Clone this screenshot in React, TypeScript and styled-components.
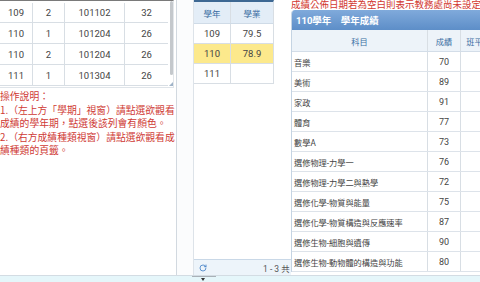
import styled, { createGlobalStyle } from 'styled-components';
import { RotateCw } from 'lucide-react';

const GlobalStyle = createGlobalStyle`
	html, body { margin: 0; padding: 0; }
	body {
		font-family: Roboto, "Noto Sans CJK TC", sans-serif;
		background: #fff;
		color: #444;
	}
`;

const terms = [
	['109', '2', '101102', '32'],
	['110', '1', '101204', '26'],
	['110', '2', '101204', '26'],
	['111', '1', '101304', '26']
];

const years = [
	{ year: '109', score: '79.5' },
	{ year: '110', score: '78.9', selected: true },
	{ year: '111', score: '' }
];

const grades = [
	['音樂', '70'],
	['美術', '89'],
	['家政', '91'],
	['體育', '77'],
	['數學A', '73'],
	['選修物理-力學一', '76'],
	['選修物理-力學二與熱學', '72'],
	['選修化學-物質與能量', '75'],
	['選修化學-物質構造與反應速率', '87'],
	['選修生物-細胞與遺傳', '90'],
	['選修生物-動物體的構造與功能', '80']
];

const notes = [
	'操作說明：',
	'1.（左上方「學期」視窗）請點選欲觀看',
	'成績的學年期，點選後該列會有顏色。',
	'2.（右方成績種類視窗）請點選欲觀看成',
	'績種類的頁籤。'
];

function App() {
	return (
		<>
			<GlobalStyle />
			<Page>
				<Main>
					<LeftPane>
						<TermBox>
							<TermTable>
								{terms.map((row, i) => (
									<TermRow key={i} $first={i === 0}>
										{row.map((cell, j) => <TermCell key={j}>{cell}</TermCell>)}
									</TermRow>
								))}
							</TermTable>
							<ScrollTrack>
								<Thumb />
								<Grip />
							</ScrollTrack>
						</TermBox>
						<Notes>
							{notes.map(line => <NoteLine key={line}>{line}</NoteLine>)}
						</Notes>
					</LeftPane>
					<Gutter />
					<MidPane>
						<YearTable>
							<YearHead>
								<YearCell $head>學年</YearCell>
								<YearCell $head>學業</YearCell>
							</YearHead>
							{years.map(y => (
								<YearRow key={y.year} $selected={y.selected}>
									<YearCell>{y.year}</YearCell>
									<YearCell>{y.score}</YearCell>
								</YearRow>
							))}
						</YearTable>
						<Pager>
							<PagerTool><RotateCw size={8} strokeWidth={2.4} /></PagerTool>
							<PagerInfo>1 - 3 共 3 筆</PagerInfo>
						</Pager>
					</MidPane>
					<RightPane>
						<Notice><span>成績公佈日期若為空白則表示教務處尚未設定</span></Notice>
						<GradePanel>
							<PanelTitle>110學年　學年成績</PanelTitle>
							<GradeHead>
								<GradeCell $head $center>科目</GradeCell>
								<GradeCell $head $center>成績</GradeCell>
								<GradeCell $head $center>班平</GradeCell>
							</GradeHead>
							{grades.map(([name, score]) => (
								<GradeRow key={name}>
									<GradeCell>{name}</GradeCell>
									<GradeCell $center $num>{score}</GradeCell>
									<GradeCell />
								</GradeRow>
							))}
						</GradePanel>
					</RightPane>
				</Main>
				<BottomStrip>
					<Handle />
				</BottomStrip>
			</Page>
		</>
	);
}

const Page = styled.div`
	display: flex;
	flex-direction: column;
	width: 480px;
	height: 282px;
	overflow: hidden;
`;

const Main = styled.div`
	display: flex;
	height: 276px;
	border-bottom: 1px solid #d3dce3;
	box-sizing: border-box;
	overflow: hidden;
`;

const LeftPane = styled.div`
	width: 176px;
	flex-shrink: 0;
	border-right: 1px solid #d2d9e0;
`;

const TermBox = styled.div`
	display: flex;
	width: 174px;
	height: 88px;
	box-sizing: border-box;
	border-top: 1px solid #7a7a7a;
	border-bottom: 1px solid #dfe4e9;
	border-right: 1px solid #e2e6ea;
`;

const TermTable = styled.div`
	width: 168px;
`;

const TermRow = styled.div<{ $first?: boolean }>`
	display: grid;
	grid-template-columns: 33px 32px 60px 43px;
	height: ${p => p.$first ? 22 : 21}px;
	padding-top: ${p => p.$first ? 2 : 0}px;
	box-sizing: border-box;
	border-bottom: 1px solid #d8dee4;
`;

const TermCell = styled.div`
	display: flex;
	align-items: center;
	justify-content: center;
	font-size: 9.5px;
	color: #444;
	border-right: 1px solid #d8dee4;

	&:last-child { border-right: none; }
`;

const ScrollTrack = styled.div`
	position: relative;
	width: 5px;
	margin-left: 1px;
`;

const Thumb = styled.div`
	width: 3px;
	height: 74px;
	margin-left: 1px;
	background: #c4c8cc;
	border-radius: 2px;
`;

const Grip = styled.div`
	position: absolute;
	right: 0;
	bottom: 1px;
	width: 0;
	height: 0;
	border-left: 4px solid transparent;
	border-bottom: 4px solid #9fb3c8;
`;

const Notes = styled.div`
	padding-top: 2px;
	font-family: "Noto Sans CJK TC", sans-serif;
	font-size: 9.8px;
	line-height: 13.5px;
	color: #cf3a34;
`;

const NoteLine = styled.div`
	white-space: nowrap;
`;

const Gutter = styled.div`
	width: 16px;
	flex-shrink: 0;
	background: #fbfcfd;
	border-right: 1px solid #dde3e9;
`;

const MidPane = styled.div`
	display: flex;
	flex-direction: column;
	justify-content: space-between;
	width: 97px;
	flex-shrink: 0;
	overflow: hidden;
`;

const YearTable = styled.div`
	width: 79px;
	border-top: 2px solid #3d6893;
	border-right: 1px solid #d8dee4;
`;

const YearHead = styled.div`
	display: grid;
	grid-template-columns: 37px 42px;
	height: 22px;
	box-sizing: border-box;
	background: #e3edf7;
	border-bottom: 1px solid #cfdbe7;
`;

const YearRow = styled.div<{ $selected?: boolean }>`
	display: grid;
	grid-template-columns: 37px 42px;
	height: 20px;
	box-sizing: border-box;
	background: ${p => p.$selected ? '#fce98c' : '#fff'};
	border-bottom: 1px solid #d8dee4;
`;

const YearCell = styled.div<{ $head?: boolean }>`
	display: flex;
	align-items: center;
	justify-content: center;
	font-size: ${p => p.$head ? 8.5 : 9.5}px;
	color: ${p => p.$head ? '#3b6ea3' : '#444'};
	border-right: 1px solid #d8dee4;

	&:last-child { border-right: none; }
`;

const Pager = styled.div`
	display: flex;
	align-items: center;
	height: 16px;
	box-sizing: border-box;
	background: #edf4fa;
	border-top: 1px solid #c9d8e7;
`;

const PagerTool = styled.div`
	display: flex;
	align-items: center;
	width: 69px;
	flex-shrink: 0;
	padding-left: 5px;
	box-sizing: border-box;
	color: #3d7cc4;
`;

const PagerInfo = styled.div`
	font-size: 8.5px;
	color: #555;
	white-space: nowrap;
`;

const RightPane = styled.div`
	flex: 1;
	min-width: 0;
	overflow: hidden;
`;

const Notice = styled.div`
	height: 10px;
	overflow: hidden;
	white-space: nowrap;
	font-family: "Noto Sans CJK TC", sans-serif;
	font-size: 9.5px;
	color: #d2372f;

	span {
		display: block;
		margin-top: -2px;
		line-height: 12px;
	}
`;

const GradePanel = styled.div`
	border-left: 1px solid #c5d4e3;
	border-top-left-radius: 4px;
	overflow: hidden;
`;

const PanelTitle = styled.div`
	display: flex;
	align-items: center;
	height: 20px;
	padding-left: 4px;
	background: linear-gradient(#80aadb, #5d8ec8);
	color: #fff;
	font-size: 9.5px;
	font-weight: 700;
	white-space: nowrap;
`;

const GradeHead = styled.div`
	display: grid;
	grid-template-columns: 136px 33px 28px;
	height: 22px;
	box-sizing: border-box;
	background: #edf3f9;
	border-bottom: 1px solid #d3dde8;
`;

const GradeRow = styled.div`
	display: grid;
	grid-template-columns: 136px 33px 28px;
	height: 20px;
	box-sizing: border-box;
	border-bottom: 1px solid #dde3ea;
`;

const GradeCell = styled.div<{ $head?: boolean; $center?: boolean; $num?: boolean }>`
	display: flex;
	align-items: center;
	justify-content: ${p => p.$center ? 'center' : 'flex-start'};
	padding-left: ${p => p.$center ? 0 : 2}px;
	font-size: ${p => p.$num ? 9 : 8.2}px;
	color: ${p => p.$head ? '#3b6ea3' : '#444'};
	white-space: nowrap;
	border-right: 1px solid #d8dee4;
`;

const BottomStrip = styled.div`
	flex: 1;
	background: #e5f6fa;
`;

const Handle = styled.div`
	position: relative;
	width: 24px;
	height: 5px;
	margin-left: 192px;
	border-top: 1px solid #a9b1b8;

	&::after {
		content: '';
		position: absolute;
		left: 9px;
		top: 1px;
		border-left: 2.5px solid transparent;
		border-right: 2.5px solid transparent;
		border-top: 3px solid #333;
	}
`;

export default App;
